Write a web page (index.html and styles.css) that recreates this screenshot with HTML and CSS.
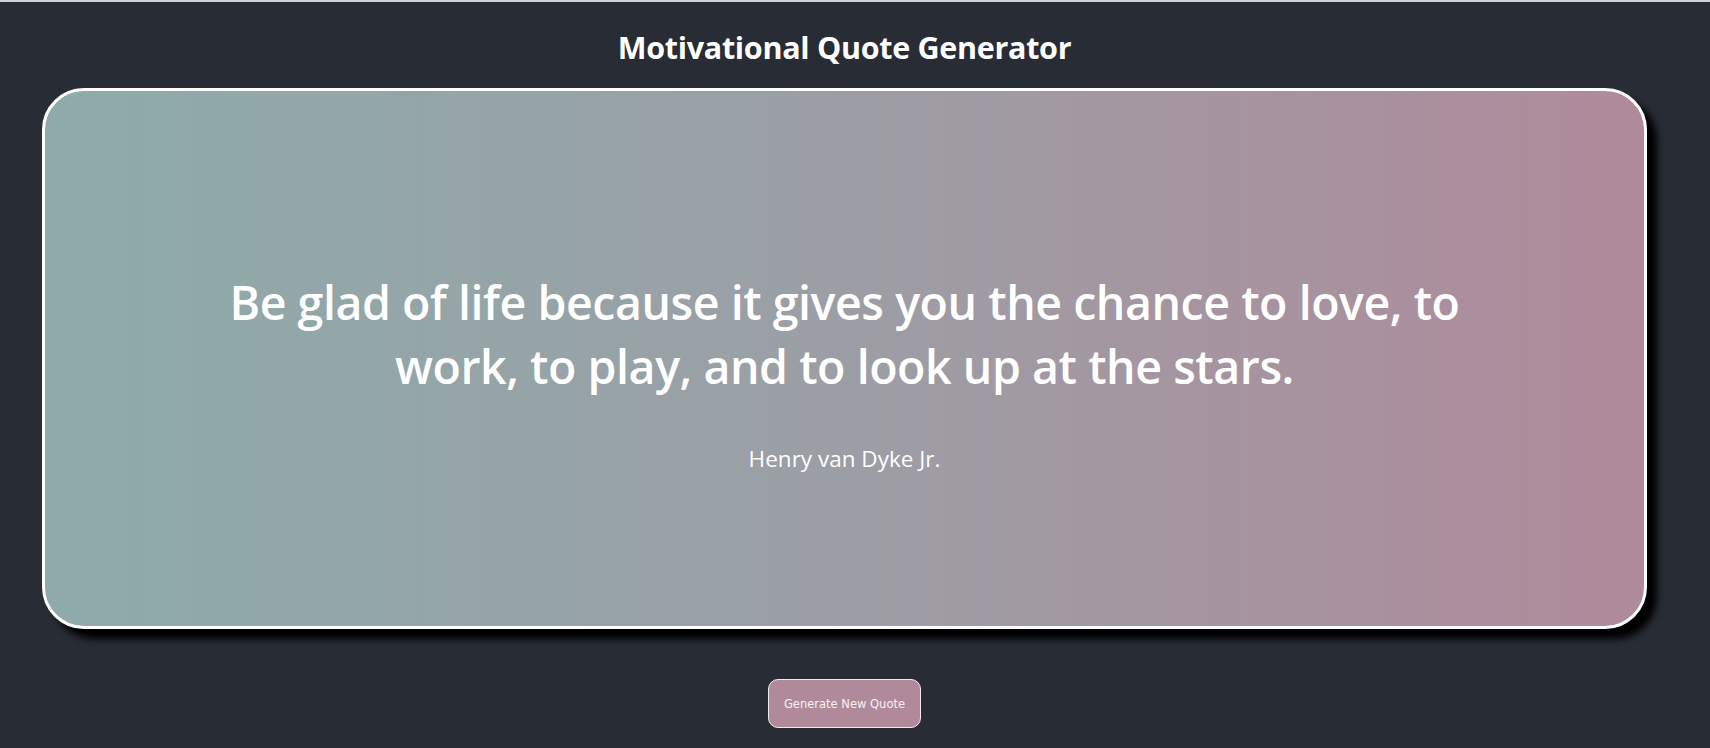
FILE: index.html
```html
<!DOCTYPE html>
<html lang="en">
<head>
<meta charset="utf-8">
<title>Motivational Quote Generator</title>
<link rel="stylesheet" href="styles.css">
</head>
<body>
<div class="app">
  <h1 class="title">Motivational Quote Generator</h1>
  <div class="card">
    <p class="quote">Be glad of life because it gives you the chance to love, to work, to play, and to look up at the stars.</p>
    <p class="author">Henry van Dyke Jr.</p>
  </div>
  <div class="actions">
    <button class="btn" type="button">Generate New Quote</button>
  </div>
</div>
</body>
</html>
```
FILE: styles.css
```css
html, body {
  margin: 0;
  padding: 0;
  height: 100%;
}
body {
  background: #282c35;
  border-top: 2px solid #cfd1d4;
  box-sizing: border-box;
  font-family: "Open Sans", "Noto Sans", sans-serif;
  color: #fff;
  overflow: hidden;
}
.app {
  display: flex;
  flex-direction: column;
  align-items: stretch;
  padding: 0 63px 0 42px;
}
.title {
  margin: 0;
  padding-top: 26px;
  height: 86px;
  box-sizing: border-box;
  text-align: center;
  font-size: 30.5px;
  font-weight: 700;
  line-height: 38px;
  letter-spacing: -0.3px;
}
.card {
  height: 541px;
  box-sizing: border-box;
  border: 3px solid #fff;
  border-radius: 42px;
  background: linear-gradient(90deg, #8eabaa 0%, #9aa0a6 45%, #b08a9b 100%);
  box-shadow: 10px 10px 7px #000;
  display: flex;
  flex-direction: column;
  align-items: center;
  justify-content: center;
  padding: 26px 0 0;
}
.quote {
  margin: 0;
  width: 1300px;
  text-align: center;
  font-size: 46.5px;
  line-height: 64px;
  font-weight: 600;
  letter-spacing: -0.45px;
}
.author {
  margin: 46px 0 0;
  font-size: 22.5px;
  line-height: 30px;
  font-weight: 400;
}
.actions {
  display: flex;
  justify-content: center;
  padding-top: 50px;
}
.btn {
  width: 153px;
  height: 49px;
  border: 1px solid #f2eaee;
  border-radius: 10px;
  background: #b08a9b;
  color: #f7f0f3;
  font-family: "DejaVu Sans", Verdana, sans-serif;
  font-size: 11.5px;
  padding: 0;
}
```
